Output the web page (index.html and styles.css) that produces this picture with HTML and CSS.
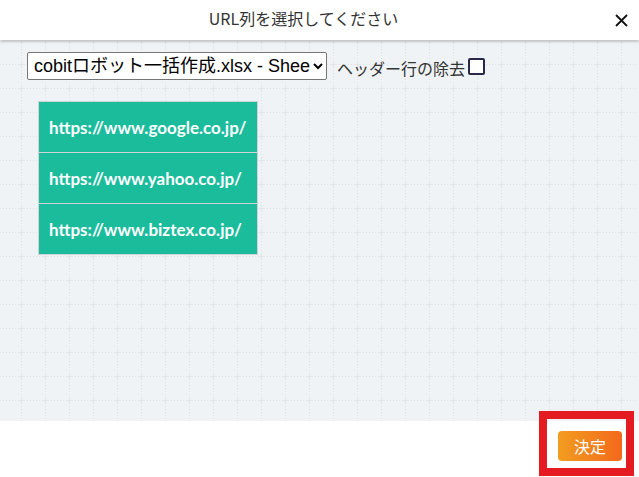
FILE: index.html
```html
<!DOCTYPE html>
<html lang="ja">
<head>
<meta charset="UTF-8">
<title>URL列を選択してください</title>
<link rel="stylesheet" href="styles.css">
</head>
<body>

<div class="dialog">
    <div class="dialog-header">
        <div class="dialog-title">URL列を選択してください</div>
        <div class="dialog-close">
            <svg width="13" height="13" viewBox="0 0 13 13"><path d="M1 1 L12 12 M12 1 L1 12" stroke="#111" stroke-width="1.8" fill="none"/></svg>
        </div>
    </div>

    <div class="dialog-body">
        <div class="toolbar">
            <select class="sheet-select">
                <option>cobitロボット一括作成.xlsx - Sheet1</option>
            </select>
            <label class="header-toggle">ヘッダー行の除去<span class="check"></span></label>
        </div>

        <table class="url-table">
            <tr><td>https://www.google.co.jp/</td></tr>
            <tr><td>https://www.yahoo.co.jp/</td></tr>
            <tr><td>https://www.biztex.co.jp/</td></tr>
        </table>
    </div>

    <div class="dialog-footer">
        <button class="ok-btn">決定</button>
    </div>

    <div class="highlight"></div>
</div>

</body>
</html>
```

FILE: styles.css
```css
html, body { margin: 0; padding: 0; }
body { font-family: "Noto Sans CJK JP", "Noto Sans", sans-serif; color: #333; background: #fff; }

.dialog { position: relative; width: 639px; height: 477px; overflow: hidden; display: flex; flex-direction: column; }

.dialog-header { height: 40px; display: flex; align-items: center; background: #fff; box-shadow: 0 1px 3px rgba(0,0,0,0.35); position: relative; z-index: 1; }
.dialog-title { flex: 1; text-align: center; font-size: 16px; color: #333; line-height: 20px; padding-left: 4px; margin-top: -4px; }
.dialog-close { width: 36px; display: flex; justify-content: center; align-items: center; padding-top: 1px; }
.dialog-close svg { display: block; }

.dialog-body {
    height: 380px; margin-top: 1px; padding: 11px 0 0 27px; box-sizing: border-box;
    background-color: #f0f3f5;
    background-image: url("data:image/svg+xml,%3Csvg xmlns='http://www.w3.org/2000/svg' width='24' height='24'%3E%3Cg stroke='%23dde2e5' stroke-width='1'%3E%3Cpath d='M0 12.5H24M12.5 0V24' stroke-dasharray='1 2'/%3E%3Cpath d='M9 12.5H16M12.5 9V16' stroke='%23e2e6e8'/%3E%3C/g%3E%3C/svg%3E");
    background-position: 9px -13px;
}

.toolbar { display: flex; align-items: center; }
.sheet-select { width: 300px; height: 28px; font-family: "Liberation Sans", "Noto Sans CJK JP", sans-serif; font-size: 18px; color: #000; background: #fff; border: 1px solid #767676; border-radius: 2px; padding: 0 0 0 2px; margin: 0; }
.header-toggle { margin-left: 10px; font-size: 16px; color: #333; display: flex; align-items: center; margin-top: 3px; }
.check { display: inline-block; width: 17px; height: 17px; box-sizing: border-box; border: 2px solid #2a2848; border-radius: 2px; margin-left: 3px; margin-top: -2px; background: #fff; }

.url-table { border-collapse: collapse; margin: 21px 0 0 11px; }
.url-table td { background: #1abc9c; color: #fff; border: 1px solid #cfd3d4; font-family: Lato, "Open Sans", sans-serif; font-weight: bold; font-size: 17px; height: 51px; box-sizing: border-box; padding: 0 10px; }

.dialog-footer { flex: 1; background: #fff; display: flex; justify-content: flex-end; align-items: flex-start; padding: 10px 17px 0 0; }
.ok-btn { width: 64px; height: 30px; border: none; border-radius: 4px; background: linear-gradient(to right, #f29d1f, #f3691c); color: #fff; font-family: "Noto Sans CJK JP", sans-serif; font-size: 16px; padding: 0; cursor: pointer; }

.highlight { position: absolute; left: 539px; top: 411px; width: 95px; height: 65px; box-sizing: border-box; border: 8px solid #e41c21; z-index: 2; }
```
